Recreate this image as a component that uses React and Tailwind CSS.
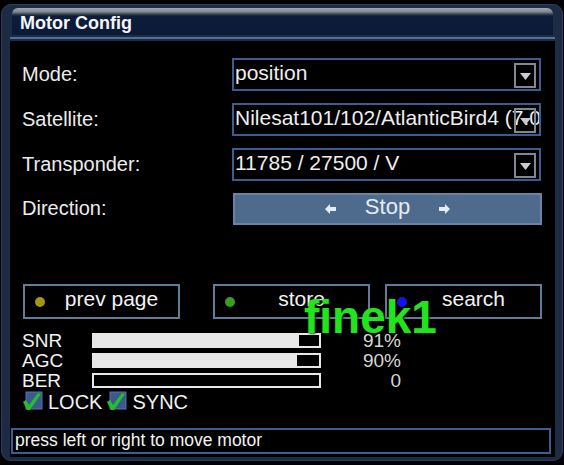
import React from "react";

function Arrow({ dir }) {
  return (
    <svg width="12" height="10" viewBox="0 0 12 10" className={dir === "right" ? "rotate-180" : ""}>
      <path d="M0 5 L5 0 L5 3 L11 3 L11 7 L5 7 L5 10 Z" fill="#e4ecf4" />
    </svg>
  );
}

function ArrowBox({ transparent }) {
  return (
    <div
      className={
        "absolute right-[3px] top-[3px] w-[22px] h-[25px] border-2 border-[#7d8894] flex items-end justify-center pb-[6px] " +
        (transparent ? "bg-transparent" : "bg-black")
      }
    >
      <svg width="11" height="7" viewBox="0 0 11 7">
        <path d="M0 0 L11 0 L5.5 7 Z" fill="#c8ccd2" />
      </svg>
    </div>
  );
}

function Dropdown({ children, transparent }) {
  return (
    <div className="relative w-[309px] h-[33px] border-2 border-[#3d5d91] bg-black overflow-hidden flex items-center pl-[1px]">
      <span className="text-[21px] text-[#eeeeee] whitespace-nowrap leading-none pb-[4px]">{children}</span>
      <ArrowBox transparent={transparent} />
    </div>
  );
}

function Row({ label, children, h = "h-[33px]" }) {
  return (
    <div className={"flex items-center " + h}>
      <div className="w-[210px] text-[20px] text-[#ececec] leading-none pb-[2px]">{label}</div>
      {children}
    </div>
  );
}

function Btn({ dot, label, className = "" }) {
  return (
    <div className={"h-[35px] w-[157px] border-2 border-[#5f7d98] bg-black flex items-center " + className}>
      <div className="w-[10px] h-[10px] rounded-full ml-[10px]" style={{ background: dot }} />
      <div className="flex-1 text-center text-[21px] text-[#f2f2f2] leading-none pb-[7px]">{label}</div>
    </div>
  );
}

function Meter({ label, pct, value }) {
  return (
    <div className="flex items-center h-[20px]">
      <div className="w-[70px] text-[19px] leading-none text-[#f2f2f2]">{label}</div>
      <div className="w-[229px] h-[15px] border-2 border-[#e8e8e8] bg-black">
        <div className="h-full bg-[#e8e8e8]" style={{ width: pct + "%" }} />
      </div>
      <div className="w-[80px] text-right text-[19px] leading-none text-[#d6d6d6]">{value}</div>
    </div>
  );
}

function Check() {
  return (
    <svg width="21" height="21" viewBox="0 0 21 21">
      <rect x="4" y="1" width="16" height="17" fill="#3a5a8e" stroke="#5474a6" strokeWidth="1" />
      <path d="M1 11 L4 9 L7 14 L16 2 L19 3 L8 19 L5 19 Z" fill="#22c02a" />
    </svg>
  );
}

export default function App() {
  return (
    <div className="w-[564px] h-[465px] bg-black overflow-hidden pt-[4px] pl-[1px] pr-[1px] font-['Liberation_Sans',Arial,sans-serif] relative">
      <div className="h-[457px] rounded-[10px] bg-[#1d2c45] border border-[#2c3f5e] pl-[8px] pr-[7px] pt-[3px] pb-[3px] flex flex-col">
        {/* title */}
        <div className="ml-[2px] mr-[2px] h-[27px] rounded-t-[6px] bg-[linear-gradient(to_bottom,#a2a8b0_0px,#7d858f_4px,#3b4656_6px,#0c1c3b_8px,#0b1a37_100%)] flex items-center pl-[8px] pt-[3px]">
          <span className="text-[18px] font-bold text-[#f4f4f4] leading-none">Motor Config</span>
        </div>
        <div className="h-[6px] flex flex-col justify-center">
          <div className="h-[2px] bg-[#50709a]" />
        </div>
        {/* content */}
        <div className="flex-1 bg-black flex flex-col pt-[17px] pl-[12px]">
          <div className="flex flex-col gap-[12px]">
            <Row label="Mode:">
              <Dropdown>position</Dropdown>
            </Row>
            <Row label="Satellite:">
              <Dropdown transparent>Nilesat101/102/AtlanticBird4 (7.0°E)</Dropdown>
            </Row>
            <Row label="Transponder:">
              <Dropdown>11785 / 27500 / V</Dropdown>
            </Row>
            <Row label="Direction:" h="h-[32px]">
              <div className="w-[309px] h-[32px] ml-[1px] border-2 border-[#6985a6] bg-[#4e6b8d] flex items-center justify-center gap-[28px]">
                <Arrow dir="left" />
                <span className="text-[22px] text-[#e4ecf4] leading-none pb-[5px]">Stop</span>
                <Arrow dir="right" />
              </div>
            </Row>
          </div>

          <div className="flex mt-[59px] ml-[1px]">
            <Btn dot="#a69616" label="prev page" />
            <Btn dot="#3c9c1c" label="store" className="ml-[33px] w-[156px]" />
            <Btn dot="#1414e6" label="search" className="ml-[15px] w-[156px]" />
          </div>

          <div className="mt-[11px] flex flex-col">
            <Meter label="SNR" pct={91} value="91%" />
            <Meter label="AGC" pct={90} value="90%" />
            <Meter label="BER" pct={0} value="0" />
          </div>

          <div className="mt-[1px] h-[21px] flex items-center text-[20px] leading-none text-[#f2f2f2]">
            <Check />
            <span className="ml-[5px]">LOCK</span>
            <span className="ml-[4px]"><Check /></span>
            <span className="ml-[5px]">SYNC</span>
          </div>

          <div className="mt-[16px] -ml-[11px] mr-[4px] h-[26px] border-2 border-[#3e5e92] bg-black flex items-center pl-[2px]">
            <span className="text-[17.5px] text-[#f4f4f4] leading-none pb-[1px]">press left or right to move motor</span>
          </div>
        </div>
      </div>

      <div className="absolute left-[304px] top-[294px] text-[46px] font-bold leading-none text-[#22e41e] [text-shadow:1px_1px_2px_rgba(0,0,0,0.7)]">
        finek1
      </div>
    </div>
  );
}
